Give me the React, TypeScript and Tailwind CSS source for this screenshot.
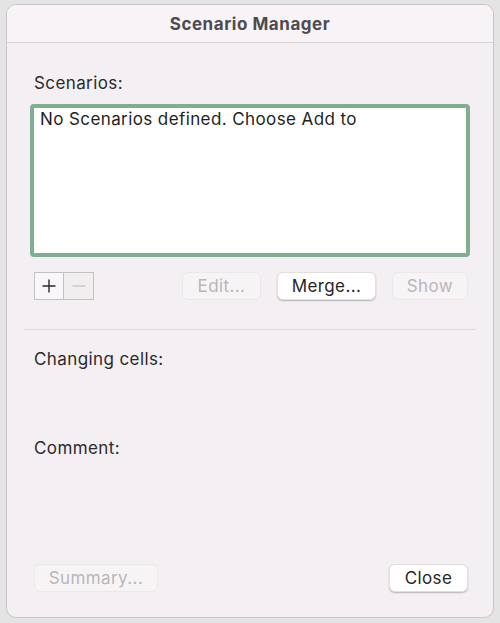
import React from 'react';

const font = { fontFamily: 'Inter, "Noto Sans", sans-serif' };

const PushButton = ({ label, disabled, className = '' }: { label: string; disabled?: boolean; className?: string }) => (
  <button
    disabled={disabled}
    className={`h-[28px] rounded-[6px] text-[17px] tracking-[0.4px] leading-none ${
      disabled
        ? 'bg-[#f7f4f6] border border-[#ebe7ea] text-[#b9b6b9]'
        : 'bg-white border border-[#e2dfe1] text-[#262626] shadow-[0_1px_1.5px_rgba(0,0,0,0.25)]'
    } ${className}`}
  >
    {label}
  </button>
);

export default function App() {
  return (
    <div className="w-[500px] h-[623px] bg-[#e5e4e5] pt-[4px] pl-[6px]" style={font}>
      <div className="w-[488px] h-[614px] rounded-[10px] border border-[#c7c5c7] bg-[#f3eff2] flex flex-col overflow-hidden">
        <div className="h-[38px] shrink-0 bg-[#f7f3f6] border-b border-[#d8d4d7] flex items-center justify-center pt-[3px]">
          <span className="text-[17px] tracking-[0.55px] font-bold text-[#4d4b4d]">Scenario Manager</span>
        </div>

        <div className="flex-1 flex flex-col px-[23px] text-[17px] tracking-[0.4px]">
          <div className="mt-[30px] pl-[4px] leading-[20px] text-[#2b2a2b]">Scenarios:</div>

          <div className="mt-[11px] h-[153px] rounded-[4px] border-[4px] border-[#7fae93] bg-white px-[6px] pt-px">
            <div className="leading-[20px] text-[#1f1f1f]">No Scenarios defined. Choose Add to</div>
          </div>

          <div className="mt-[15px] flex items-center">
            <div className="ml-[4px] flex h-[28px] border border-[#c4c1c4]">
              <div className="w-[29px] flex items-center justify-center bg-[#f8f6f8] border-r border-[#c4c1c4]">
                <svg width="16" height="16" viewBox="0 0 16 16">
                  <path d="M8 1.5v13M1.5 8h13" stroke="#2a2a2a" strokeWidth="1.4" />
                </svg>
              </div>
              <div className="w-[29px] flex items-center justify-center bg-[#f1eef0]">
                <svg width="16" height="16" viewBox="0 0 16 16">
                  <path d="M1.5 8h13" stroke="#c2bfc2" strokeWidth="1.2" />
                </svg>
              </div>
            </div>
            <PushButton label="Edit..." disabled className="ml-[88px] w-[79px]" />
            <PushButton label="Merge..." className="ml-[16px] w-[99px]" />
            <PushButton label="Show" disabled className="ml-[16px] w-[76px]" />
          </div>

          <div className="mt-[29px] -mx-[6px] h-px bg-[#dedadd]" />

          <div className="mt-[19px] pl-[4px] leading-[20px] text-[#2b2a2b]">Changing cells:</div>
          <div className="mt-[69px] pl-[4px] leading-[20px] text-[#2b2a2b]">Comment:</div>

          <div className="mt-auto mb-[25px] flex items-center justify-between">
            <PushButton label="Summary..." disabled className="ml-[4px] w-[124px]" />
            <PushButton label="Close" className="mr-[2px] w-[79px]" />
          </div>
        </div>
      </div>
    </div>
  );
}
